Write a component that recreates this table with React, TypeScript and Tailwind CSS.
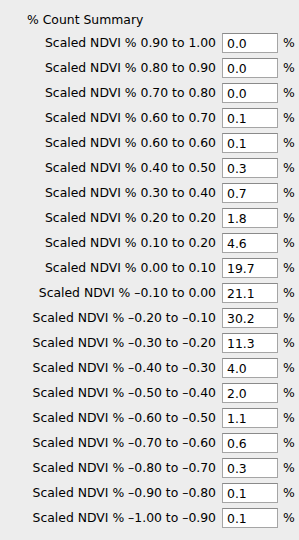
const rows: [string, string][] = [
  ["0.90 to 1.00", "0.0"],
  ["0.80 to 0.90", "0.0"],
  ["0.70 to 0.80", "0.0"],
  ["0.60 to 0.70", "0.1"],
  ["0.60 to 0.60", "0.1"],
  ["0.40 to 0.50", "0.3"],
  ["0.30 to 0.40", "0.7"],
  ["0.20 to 0.20", "1.8"],
  ["0.10 to 0.20", "4.6"],
  ["0.00 to 0.10", "19.7"],
  ["–0.10 to 0.00", "21.1"],
  ["–0.20 to –0.10", "30.2"],
  ["–0.30 to –0.20", "11.3"],
  ["–0.40 to –0.30", "4.0"],
  ["–0.50 to –0.40", "2.0"],
  ["–0.60 to –0.50", "1.1"],
  ["–0.70 to –0.60", "0.6"],
  ["–0.80 to –0.70", "0.3"],
  ["–0.90 to –0.80", "0.1"],
  ["–1.00 to –0.90", "0.1"],
];

export default function App() {
  return (
    <div className="h-[540px] w-[299px] bg-[#ededed] font-['DejaVu_Sans',sans-serif] text-[12.4px] text-black">
      <div className="pl-[27px] pt-[12px] leading-[16px]">% Count Summary</div>
      <div className="mt-[5px] flex flex-col gap-[5px] pr-[7px]">
        {rows.map(([range, value]) => (
          <div key={range} className="flex h-[20px] items-center">
            <span className="flex-1 whitespace-nowrap pr-[6px] text-right">Scaled NDVI % {range}</span>
            <div className="flex h-[20px] w-[56px] items-center border border-[#a5a5a5] border-t-[#8a8a8a] bg-white pl-[4px] pt-[2px]">
              {value}
            </div>
            <span className="ml-[5px] w-[9px]">%</span>
          </div>
        ))}
      </div>
    </div>
  );
}
